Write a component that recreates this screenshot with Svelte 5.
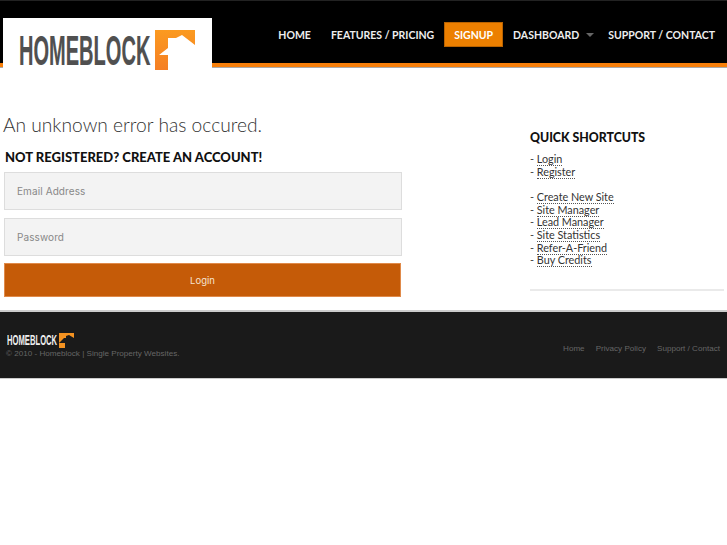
<script>
  const navItems = [
    { label: 'HOME' },
    { label: 'FEATURES / PRICING' },
    { label: 'SIGNUP', active: true },
    { label: 'DASHBOARD', caret: true },
    { label: 'SUPPORT / CONTACT' }
  ];
  const accountLinks = ['Login', 'Register'];
  const siteLinks = ['Create New Site', 'Site Manager', 'Lead Manager', 'Site Statistics', 'Refer-A-Friend', 'Buy Credits'];
  const footerLinks = ['Home', 'Privacy Policy', 'Support / Contact'];
</script>

<div class="page">
  <header>
    <div class="logo">
      <span class="logo-text">HOMEBLOCK</span>
      <svg width="40" height="40" viewBox="0 0 40 40">
        <defs>
          <linearGradient id="logoFill" x1="0" y1="0" x2="0" y2="1">
            <stop offset="0" stop-color="#fb9a20" />
            <stop offset="1" stop-color="#f57f25" />
          </linearGradient>
        </defs>
        <path d="M0 0H40V15L27 5L21 8H13V18L4 25H13V40H0Z" fill="url(#logoFill)" />
      </svg>
    </div>
    <nav>
      {#each navItems as item}
        <a href="#top" class:active={item.active}>
          {item.label}
          {#if item.caret}<span class="caret"></span>{/if}
        </a>
      {/each}
    </nav>
  </header>

  <main>
    <section class="content">
      <h1>An unknown error has occured.</h1>
      <h2>NOT REGISTERED? CREATE AN ACCOUNT!</h2>
      <form>
        <input type="text" placeholder="Email Address" />
        <input type="password" placeholder="Password" />
        <button type="button">Login</button>
      </form>
    </section>
    <aside>
      <h3>QUICK SHORTCUTS</h3>
      <ul>
        {#each accountLinks as link}
          <li>- <a href="#top">{link}</a></li>
        {/each}
      </ul>
      <ul>
        {#each siteLinks as link}
          <li>- <a href="#top">{link}</a></li>
        {/each}
      </ul>
    </aside>
  </main>

  <footer>
    <div class="foot-left">
      <div class="foot-logo">
        <span class="foot-logo-text">HOMEBLOCK</span>
        <svg width="15" height="15" viewBox="0 0 15 15">
          <path d="M0 0H15V15H0Z" fill="#f39221" />
          <path d="M0 10L5 5H7V3L10 2L15 5V15H6V10Z" fill="#1a1a1a" />
        </svg>
      </div>
      <p>© 2010 - Homeblock | Single Property Websites.</p>
    </div>
    <div class="foot-links">
      {#each footerLinks as link}
        <a href="#top">{link}</a>
      {/each}
    </div>
  </footer>
</div>

<style>
  :global(body) {
    margin: 0;
    background: #fff;
  }

  .page {
    font-family: Lato, "Liberation Sans", sans-serif;
    width: 727px;
    min-height: 545px;
    overflow: hidden;
  }

  header {
    display: flex;
    justify-content: space-between;
    height: 62px;
    background: #000;
    border-top: 1px solid #222;
    border-bottom: 4px solid #f77f0a;
    box-shadow: 0 1px 0 #aaa;
    box-sizing: content-box;
  }

  .logo {
    display: flex;
    align-items: flex-start;
    flex: none;
    margin: 17px 0 -5px 3px;
    width: 209px;
    padding: 12px 0 0 16px;
    box-sizing: border-box;
    background: #fff;
    position: relative;
  }

  .logo svg {
    display: block;
    margin-left: 2px;
  }

  .logo-text {
    display: block;
    width: 134px;
    height: 40px;
    font-family: "Liberation Sans", sans-serif;
    font-size: 43px;
    line-height: 40px;
    font-weight: 700;
    color: #505050;
    white-space: nowrap;
    transform: scaleX(0.466);
    transform-origin: left;
    -webkit-text-stroke: 0.2px #505050;
  }

  nav {
    display: flex;
    align-items: flex-start;
    margin-top: 21px;
    padding-right: 2px;
  }

  nav a {
    display: flex;
    align-items: center;
    height: 25px;
    padding: 0 10px;
    font-size: 10.5px;
    font-weight: 700;
    color: #eee;
    text-decoration: none;
    white-space: nowrap;
  }

  nav a.active {
    background: #ec7f00;
    border: 1px solid #b86200;
    height: 23px;
    padding: 0 9px;
    color: #fff;
  }

  .caret {
    margin-left: 7px;
    margin-right: -6px;
    border-left: 4px solid transparent;
    border-right: 4px solid transparent;
    border-top: 4px solid #666;
  }

  main {
    display: flex;
    justify-content: space-between;
    height: 243px;
  }

  .content {
    width: 402px;
    padding-left: 3px;
  }

  h1 {
    margin: 45px 0 0;
    font-size: 19.2px;
    line-height: 26px;
    font-weight: 300;
    color: #333;
  }

  h2 {
    margin: 10px 0 6px 2px;
    font-size: 13px;
    line-height: 18px;
    font-weight: 900;
    color: #111;
    white-space: nowrap;
  }

  form {
    display: flex;
    flex-direction: column;
    align-items: flex-start;
    margin-left: 1px;
  }

  input {
    width: 398px;
    height: 38px;
    box-sizing: border-box;
    margin-bottom: 8px;
    padding: 0 12px;
    background: #f3f3f3;
    border: 1px solid #ddd;
    font-family: Inter, "Liberation Sans", sans-serif;
    font-size: 10px;
  }

  input::placeholder {
    color: #888;
    opacity: 1;
    letter-spacing: 0.1px;
  }

  button {
    width: 397px;
    height: 34px;
    margin-top: -1px;
    background: #c55b08;
    border: 1px solid #e08a4a;
    color: #f6e3d0;
    font-family: Inter, "Liberation Sans", sans-serif;
    font-size: 9.5px;
  }

  aside {
    width: 194px;
    height: 162px;
    margin: 62px 3px 0 0;
    border-bottom: 2px solid #eaeaea;
    box-sizing: border-box;
    font-size: 10.8px;
  }

  h3 {
    margin: 0 0 7px;
    font-size: 12.3px;
    line-height: 17px;
    font-weight: 900;
    color: #111;
  }

  ul {
    list-style: none;
    margin: 0 0 13px;
    padding: 0;
    color: #444;
  }

  li {
    line-height: 12.6px;
  }

  aside a {
    color: #333;
    text-decoration: none;
    border-bottom: 1px dotted #555;
  }

  footer {
    display: flex;
    justify-content: space-between;
    height: 66px;
    background: #1a1a1a;
    border-top: 2px solid #ccc;
    border-bottom: 1px solid #ccc;
    font-family: "Liberation Sans", sans-serif;
    font-size: 8.1px;
    color: #666;
  }

  .foot-left {
    padding: 20px 0 0 7px;
  }

  .foot-logo {
    display: flex;
    align-items: center;
    height: 16px;
  }

  .foot-logo-text {
    display: block;
    width: 52px;
    font-size: 15px;
    line-height: 16px;
    font-weight: 700;
    color: #eee;
    white-space: nowrap;
    transform: scaleX(0.51);
    transform-origin: left;
  }

  .foot-left p {
    margin: 0 0 0 -1px;
    line-height: 12px;
  }

  .foot-links {
    display: flex;
    gap: 11px;
    padding: 32px 7px 0 0;
  }

  .foot-links a {
    color: #666;
    text-decoration: none;
  }
</style>
